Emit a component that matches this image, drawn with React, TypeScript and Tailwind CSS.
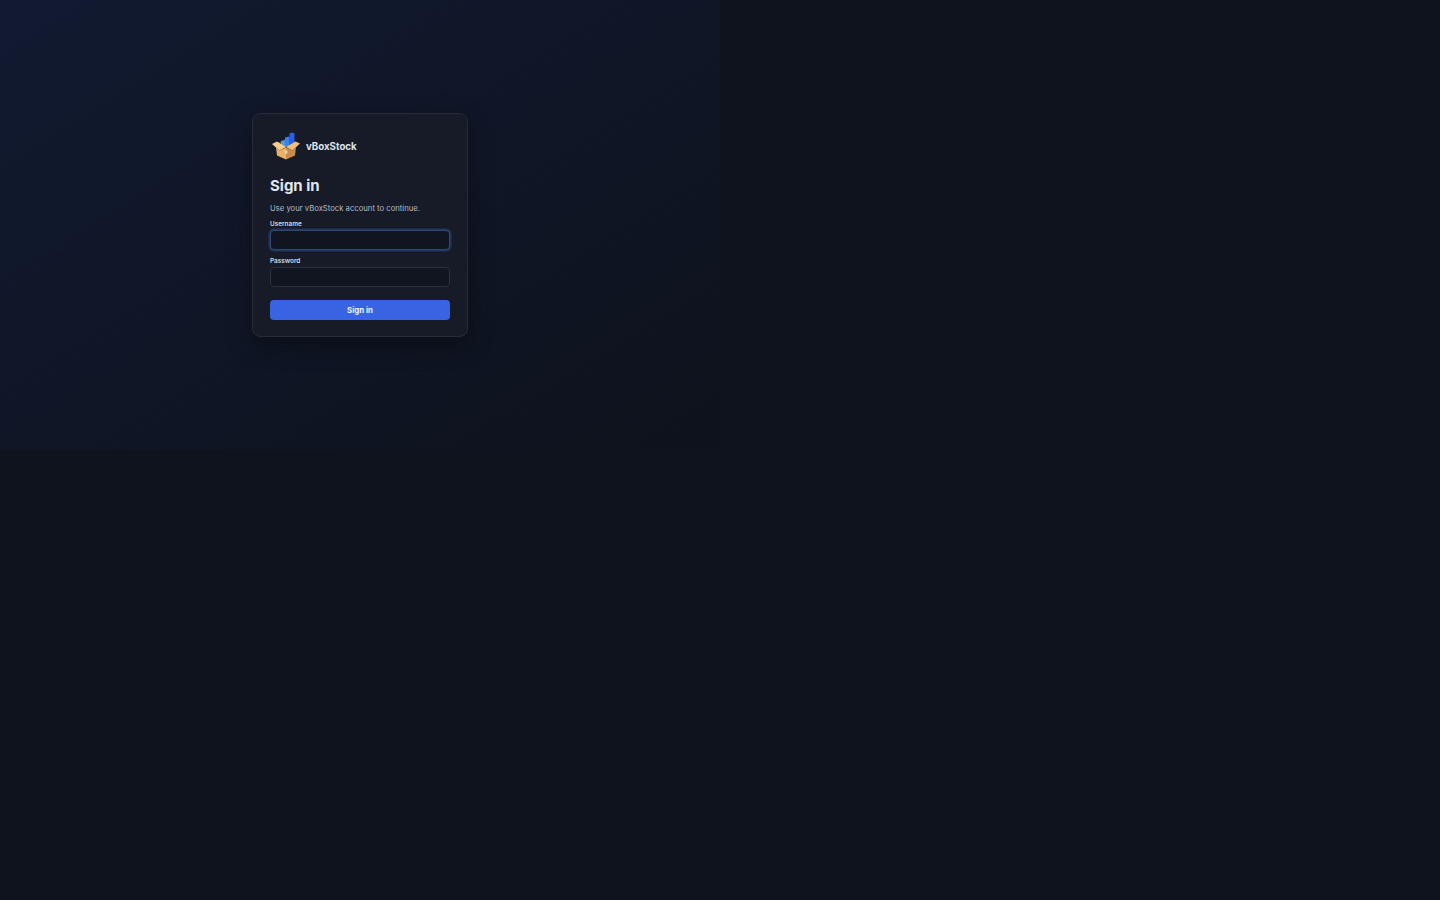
function BoxLogo() {
	return (
		<svg width="32" height="32" viewBox="0 0 32 32" className="shrink-0">
			<path d="M7 13 L16 9 L25 13 L16 18 Z" fill="#5a3f20" />
			<path d="M11 11 L15 10 L15 17 L11 15 Z" fill="#4a9be8" />
			<path d="M15 7.5 L19.5 6.5 L19.5 16 L15 17 Z" fill="#3c80ea" />
			<path d="M19.5 3.5 L22.5 2.5 L24.5 3.5 L24.5 13.5 L19.5 16 Z" fill="#2a5fe6" />
			<path d="M2 14 L7 11.5 L16 17 L9.5 20.5 Z" fill="#f6cd8c" />
			<path d="M30 13.5 L25.5 11.5 L16 17 L22.5 20.5 Z" fill="#f1bf78" />
			<path d="M6 17 L9.5 20.5 L16 17.5 L16 29.5 L7 25.5 Z" fill="#e9b06a" />
			<path d="M26 17 L22.5 20.5 L16 17.5 L16 29.5 L25 25.5 Z" fill="#c88d4c" />
			<path d="M14.6 20.5 L17.4 20.5 L17.4 23.5 L14.6 23.5 Z" fill="#f3d49a" />
		</svg>
	)
}

function Field({ label, focused }: { label: string; focused?: boolean }) {
	return (
		<div className="flex flex-col">
			<label className="text-[6.4px] leading-[10px] font-semibold text-[#d5dae3]">{label}</label>
			<input
				type={label === 'Password' ? 'password' : 'text'}
				className={`mt-[1.5px] h-[20px] w-full rounded-[4px] border bg-[#101520] outline-none ${
					focused
						? 'border-[#2d4673] shadow-[0_0_0_1.5px_#22365c]'
						: 'border-[#2a303c]'
				}`}
			/>
		</div>
	)
}

export default function App() {
	return (
		<div className="min-h-[900px] bg-[#0f131d] font-['Inter',sans-serif]">
			<div className="flex h-[450px] w-[720px] items-center justify-center bg-gradient-to-br from-[#111a31] to-[#0e121c]">
				<div className="w-[216px] rounded-[8px] border border-[#262b37] bg-[#161b27] px-[17px] py-[16px] shadow-[0_8px_24px_rgba(0,0,0,0.35)]">
					<div className="flex items-center gap-[4px]">
						<BoxLogo />
						<span className="pt-[2px] text-[9.7px] font-bold text-[#dfe4ec]">vBoxStock</span>
					</div>
					<h1 className="mt-[14px] text-[15px] leading-[20px] font-bold text-[#e2e7ef]">Sign in</h1>
					<p className="mt-[6.5px] text-[7.7px] leading-[12px] text-[#b4bac5]">
						Use your vBoxStock account to continue.
					</p>
					<div className="mt-[4px] flex flex-col gap-[5.5px]">
						<Field label="Username" focused />
						<Field label="Password" />
					</div>
					<button
						type="button"
						className="mt-[13px] h-[20px] w-full rounded-[4px] bg-[#3864e4] pt-[1px] text-[7.8px] font-bold text-[#f3f6fc]"
					>
						Sign in
					</button>
				</div>
			</div>
		</div>
	)
}
